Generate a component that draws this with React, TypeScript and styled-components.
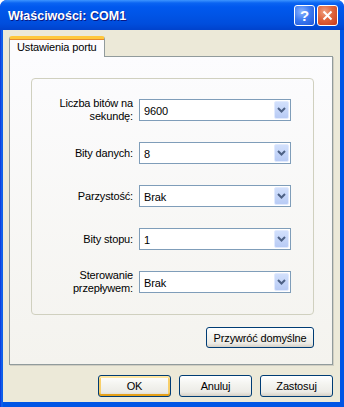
import * as React from 'react';
import styled, { createGlobalStyle } from 'styled-components';

const GlobalStyle = createGlobalStyle`
  html, body {
    margin: 0;
    padding: 0;
    background: #ffffff;
  }
  body {
    font-family: "Liberation Sans", Arial, sans-serif;
    font-size: 11px;
    letter-spacing: -0.15px;
    color: #000000;
  }
`;

const Window = styled.div`
  width: 344px;
  height: 407px;
  display: flex;
  flex-direction: column;
  border-radius: 7px 7px 0 0;
  overflow: hidden;
  background: #0831d9;
`;

const TitleBar = styled.div`
  height: 30px;
  flex: none;
  display: flex;
  align-items: center;
  padding: 0 6px 0 8px;
  box-sizing: border-box;
  background: linear-gradient(
    to bottom,
    #3d95ff 0px,
    #0a64f2 3px,
    #0058ee 7px,
    #0054e6 50%,
    #004ddc 80%,
    #0042cc 100%
  );
`;

const Title = styled.div`
  flex: 1;
  color: #ffffff;
  font-family: "Liberation Sans", Arial, sans-serif;
  font-weight: bold;
  font-size: 12.5px;
  letter-spacing: 0;
  text-shadow: 1px 1px 0 #0a1883;
  padding-top: 1px;
`;

const CaptionButton = styled.div<{ $kind: 'help' | 'close' }>`
  width: 21px;
  height: 21px;
  box-sizing: border-box;
  border: 1px solid #ffffff;
  border-radius: 3px;
  margin-left: 2px;
  display: flex;
  align-items: center;
  justify-content: center;
  color: #ffffff;
  font-family: "Liberation Sans", Arial, sans-serif;
  font-weight: bold;
  font-size: 15px;
  background: ${p =>
    p.$kind === 'close'
      ? 'radial-gradient(circle at 35% 30%, #f0a080 0%, #e0653c 45%, #c8391a 100%)'
      : 'radial-gradient(circle at 35% 30%, #8cb4ff 0%, #3a78f0 50%, #1f55d8 100%)'};
`;

const Frame = styled.div`
  flex: 1;
  display: flex;
  padding: 0 4px 5px 3px;
  background: linear-gradient(to right, #0831d9 0, #166aee 2px, #0055e5 3px);
`;

const Body = styled.div`
  flex: 1;
  display: flex;
  flex-direction: column;
  background: #ece9d8;
  padding: 6px 7px 0 6px;
`;

const TabStrip = styled.div`
  height: 20px;
  display: flex;
  position: relative;
  z-index: 1;
`;

const Tab = styled.div`
  width: 96px;
  height: 21px;
  box-sizing: border-box;
  border: 1px solid #919b9c;
  border-bottom: none;
  border-top: 3px solid #ffc83c;
  border-radius: 3px 3px 0 0;
  background: #fcfcfe;
  padding: 1px 0 0 7px;
  line-height: 14px;
  box-shadow: inset 0 1px 0 #e68b2c;
`;

const Panel = styled.div`
  height: 309px;
  box-sizing: border-box;
  border: 1px solid #919b9c;
  box-shadow: 1px 1px 0 #d0cec2;
  background: linear-gradient(to bottom, #fcfcfe, #f4f3ee);
  padding: 21px 18px 0 21px;
  display: flex;
  flex-direction: column;
`;

const GroupBox = styled.div`
  height: 237px;
  box-sizing: border-box;
  border: 1px solid #d0d0bf;
  border-radius: 4px;
  padding-top: 20px;
  display: grid;
  grid-template-columns: 101px 152px;
  grid-template-rows: repeat(5, 22px);
  column-gap: 6px;
  row-gap: 21px;
  align-content: start;
`;

const Label = styled.div`
  text-align: right;
  align-self: center;
  line-height: 13px;
`;

const Combo = styled.div`
  height: 22px;
  box-sizing: border-box;
  border: 1px solid #7f9db9;
  background: #ffffff;
  display: flex;
  align-items: center;
  padding: 1px 1px 1px 4px;
`;

const ComboValue = styled.div`
  flex: 1;
  padding-top: 1px;
`;

const ComboArrow = styled.div`
  width: 15px;
  height: 18px;
  box-sizing: border-box;
  border: 1px solid #e1eafe;
  border-radius: 2px;
  background: linear-gradient(to bottom, #d2e0fc, #b8cbf5);
  display: flex;
  align-items: center;
  justify-content: center;
`;

const Button = styled.div<{ $default?: boolean; $width: number; $height?: number }>`
  width: ${p => p.$width}px;
  height: ${p => p.$height ?? 22}px;
  box-sizing: border-box;
  border: 1px solid #003c74;
  border-radius: 3px;
  display: flex;
  align-items: center;
  justify-content: center;
  background: linear-gradient(to bottom, #ffffff 0%, #f4f4f0 40%, #ecebe6 80%, #d6d0c5 100%);
  box-shadow: ${p =>
    p.$default
      ? 'inset 0 2px 0 #ffe6a0, inset 0 -2px 0 #e5a01a, inset 2px 0 0 #f8cf6a, inset -2px 0 0 #f8cf6a'
      : 'none'};
`;

const ResetRow = styled.div`
  display: flex;
  justify-content: flex-end;
  margin-top: 12px;
`;

const ButtonRow = styled.div`
  display: flex;
  justify-content: flex-end;
  gap: 8px;
  margin-top: 10px;
`;

const Chevron = () => (
  <svg width="9" height="6" viewBox="0 0 9 6">
    <path d="M1 1 L4.5 4.5 L8 1" fill="none" stroke="#4d6185" strokeWidth="2" />
  </svg>
);

const fields = [
  { label: ['Liczba bitów na', 'sekundę:'], value: '9600' },
  { label: ['Bity danych:'], value: '8' },
  { label: ['Parzystość:'], value: 'Brak' },
  { label: ['Bity stopu:'], value: '1' },
  { label: ['Sterowanie', 'przepływem:'], value: 'Brak' },
];

export default function App() {
  return (
    <>
      <GlobalStyle />
      <Window>
        <TitleBar>
          <Title>Właściwości: COM1</Title>
          <CaptionButton $kind="help">?</CaptionButton>
          <CaptionButton $kind="close">
            <svg width="11" height="11" viewBox="0 0 11 11">
              <path d="M1.5 1.5 L9.5 9.5 M9.5 1.5 L1.5 9.5" stroke="#ffffff" strokeWidth="2" />
            </svg>
          </CaptionButton>
        </TitleBar>
        <Frame>
          <Body>
            <TabStrip>
              <Tab>Ustawienia portu</Tab>
            </TabStrip>
            <Panel>
              <GroupBox>
                {fields.map(f => (
                  <React.Fragment key={f.label.join(' ')}>
                    <Label>
                      {f.label.map(line => (
                        <div key={line}>{line}</div>
                      ))}
                    </Label>
                    <Combo>
                      <ComboValue>{f.value}</ComboValue>
                      <ComboArrow>
                        <Chevron />
                      </ComboArrow>
                    </Combo>
                  </React.Fragment>
                ))}
              </GroupBox>
              <ResetRow>
                <Button $width={108} $height={21}>
                  Przywróć domyślne
                </Button>
              </ResetRow>
            </Panel>
            <ButtonRow>
              <Button $width={73} $default>
                OK
              </Button>
              <Button $width={73}>Anuluj</Button>
              <Button $width={73}>Zastosuj</Button>
            </ButtonRow>
          </Body>
        </Frame>
      </Window>
    </>
  );
}
